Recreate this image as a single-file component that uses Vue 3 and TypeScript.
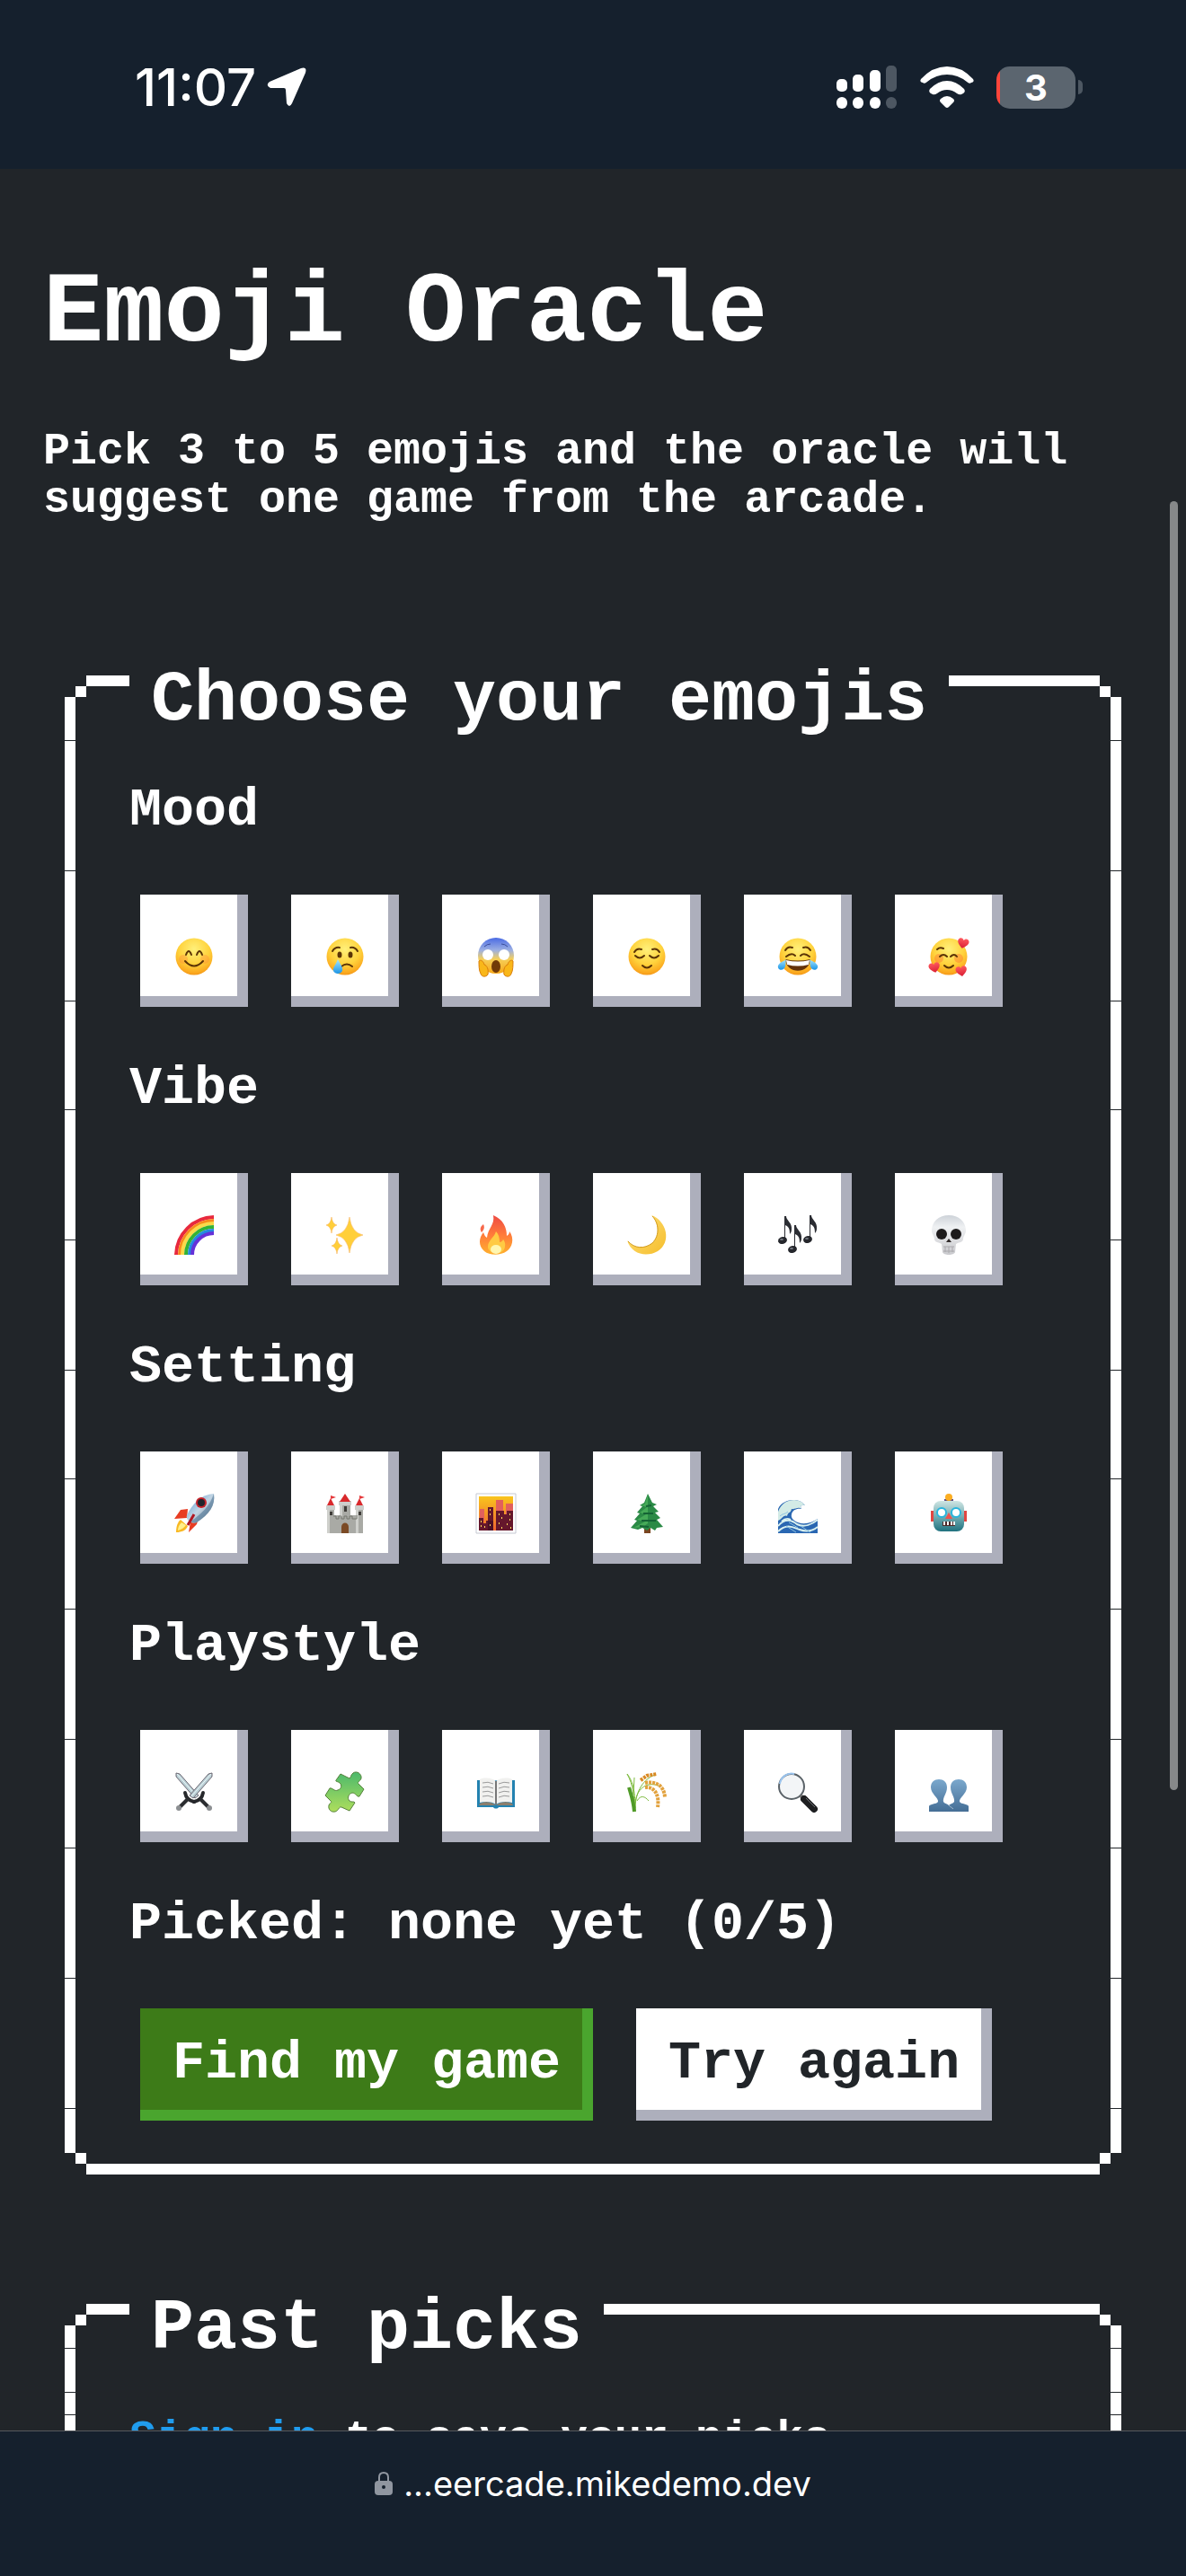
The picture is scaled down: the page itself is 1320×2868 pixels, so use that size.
<script setup lang="ts">
import { computed, ref } from 'vue'

interface Emoji {
  name: string
  art: string
}

interface Group {
  title: string
  emojis: Emoji[]
}

const MAX_PICKS = 5

const face = '<circle cx="22" cy="22" r="20.5" fill="url(#face)"/>'
const ink = 'fill="none" stroke="#5b3406" stroke-linecap="round"'
const heart = (x: number, y: number, turn: number): string =>
  `<path transform="translate(${x} ${y}) rotate(${turn})" d="M0 6C-4 3-7 0-6-3C-5-6-1-6 0-3C1-6 5-6 6-3C7 0 4 3 0 6Z" fill="url(#heart)"/>`
const note = (x: number, y: number, h: number): string =>
  `<path d="M${x} ${y}h2c0 5 7 7 6 15c0 2-1 4-2 5c0-6-1-8-5-10v${h - 12}h-1z" fill="#2b2d33"/><ellipse cx="${x - 2}" cy="${y + h}" rx="5" ry="4" transform="rotate(-15 ${x - 2} ${y + h})" fill="#25272c"/><ellipse cx="${x - 3}" cy="${y + h - 1}" rx="2" ry="1" fill="#777b84"/>`
const spark = (x: number, y: number, w: number, h: number): string =>
  `<path d="M${x} ${y - h}Q${x + w * 0.14} ${y - h * 0.14} ${x + w} ${y}Q${x + w * 0.14} ${y + h * 0.14} ${x} ${y + h}Q${x - w * 0.14} ${y + h * 0.14} ${x - w} ${y}Q${x - w * 0.14} ${y - h * 0.14} ${x} ${y - h}Z" fill="#ffcf3a" stroke="#f7ad55" stroke-width=".5"/>`
const sword =
  '<path d="M2 1L6 2L27 26L23 29L2 5Z" fill="#b9ced4" stroke="#6d6873" stroke-width="1"/><path d="M3 2L25 27" stroke="#eefafb" stroke-width="1"/><path d="M22 33C27 32 31 29 32 23" fill="none" stroke="#26282b" stroke-width="4" stroke-linecap="round"/><path d="M28 29L38 39" stroke="#2b2d30" stroke-width="4"/><circle cx="39" cy="40" r="3" fill="#8c8f92"/>'

const groups: Group[] = [
  {
    title: 'Mood',
    emojis: [
      {
        name: 'smiling face',
        art: `${face}<circle cx="10" cy="25" r="5" fill="#ff7a3c" opacity=".3"/><circle cx="34" cy="25" r="5" fill="#ff7a3c" opacity=".3"/><path d="M13 20Q16 12 19 20M25 20Q28 12 31 20" ${ink} stroke-width="2"/><path d="M12 27Q22 38 32 27" ${ink} stroke-width="2"/>`,
      },
      {
        name: 'crying face',
        art: `${face}<ellipse cx="16" cy="20" rx="2.5" ry="3.5" fill="#5b3406"/><ellipse cx="28" cy="20" rx="2.5" ry="3.5" fill="#5b3406"/><path d="M8 16Q11 11 16 12M36 16Q33 11 28 12M18 33Q24 28 30 33" ${ink} stroke-width="2"/><path d="M14 25C17 31 20 34 19 38C17 42 11 42 9 38C8 34 12 31 14 25Z" fill="url(#tear)"/>`,
      },
      {
        name: 'screaming face',
        art: '<circle cx="22" cy="21" r="20" fill="url(#scream)"/><circle cx="13" cy="20" r="6" fill="#fff"/><circle cx="31" cy="20" r="6" fill="#fff"/><path d="M9 11Q12 8 16 8M35 11Q32 8 28 8" fill="none" stroke="#3c4f9b" stroke-width="1"/><ellipse cx="22" cy="33" rx="5" ry="7" fill="#713a07"/><path d="M3 27C5 25 8 27 9 31C12 32 14 36 13 42C11 45 6 45 5 41C3 38 3 31 3 27ZM41 27C39 25 36 27 35 31C32 32 30 36 31 42C33 45 38 45 39 41C41 38 41 31 41 27Z" fill="#f9b719" stroke="#d97d0b" stroke-width="1"/>',
      },
      {
        name: 'relieved face',
        art: `${face}<path d="M8 17Q11 12 16 14M36 17Q33 12 28 14M9 21Q14 26 19 21M25 21Q30 26 35 21M17 32Q22 37 27 32" ${ink} stroke-width="2"/>`,
      },
      {
        name: 'tears of joy',
        art: `${face}<path d="M8 15Q11 10 16 12M36 15Q33 10 28 12M9 22Q15 17 19 21M35 22Q29 17 25 21" ${ink} stroke-width="2"/><path d="M8 25Q22 28 36 25C35 42 9 42 8 25Z" fill="#63320a"/><path d="M9 26Q22 29 35 26L34 31Q22 34 10 31Z" fill="#fff"/><path d="M9 25C7 27 2 28 0 32C-1 36 3 38 6 36C9 34 8 29 9 25ZM35 25C37 27 42 28 44 32C45 36 41 38 38 36C35 34 36 29 35 25Z" fill="url(#tear)"/>`,
      },
      {
        name: 'smiling face with hearts',
        art: `${face}<circle cx="11" cy="24" r="5" fill="#ff5b2e" opacity=".35"/><circle cx="33" cy="24" r="5" fill="#ff5b2e" opacity=".35"/><path d="M9 14Q12 11 16 13M12 22Q16 18 20 22M24 22Q28 18 31 22M17 32Q22 37 27 32" ${ink} stroke-width="2"/>${heart(38, 7, 12)}${heart(6, 34, -12)}${heart(36, 38, -10)}`,
      },
    ],
  },
  {
    title: 'Vibe',
    emojis: [
      {
        name: 'rainbow',
        art: '<g fill="none" stroke-width="4"><path d="M2 44A43 43 0 0 1 44 2" stroke="#e8293d"/><path d="M6 44A39 39 0 0 1 44 6" stroke="#f98a1b"/><path d="M9 44A35 35 0 0 1 44 9" stroke="#fbd94a"/><path d="M13 44A31 31 0 0 1 44 13" stroke="#34b334"/><path d="M17 44A27 27 0 0 1 44 17" stroke="#2389e0"/><path d="M20 44A24 24 0 0 1 44 20" stroke="#6531d8"/></g>',
      },
      { name: 'sparkles', art: spark(27, 22, 15, 20) + spark(7, 11, 6, 9) + spark(13, 34, 6, 9) },
      {
        name: 'fire',
        art: '<path d="M19 0C30 5 34 13 34 23C36 22 37 20 37 18C43 26 40 36 34 40C27 45 15 45 9 40C2 34 3 25 8 19C9 22 10 24 12 25C13 14 21 11 19 0Z" fill="url(#fire)"/><path d="M8 10C4 13 4 16 6 19C8 17 10 14 8 10Z" fill="#f7684a"/><path d="M22 18C20 25 13 28 13 35C13 44 31 45 32 35C33 31 31 28 30 27C29 29 28 30 26 30C26 25 25 21 22 18Z" fill="#ffca43"/><ellipse cx="22" cy="38" rx="6" ry="5" fill="#fff6b0"/>',
      },
      {
        name: 'crescent moon',
        art: '<path d="M27 0C44 6 50 30 34 40C22 47 5 44 0 28C7 37 19 38 28 31C37 22 35 8 27 0Z" fill="url(#moon)"/><path d="M1 29C8 37 19 38 28 31C37 22 35 8 28 1" fill="none" stroke="#d29a1c" stroke-width="1"/>',
      },
      { name: 'musical notes', art: note(7, 1, 27) + note(18, 11, 27) + note(35, 0, 27) },
      {
        name: 'skull',
        art: '<path d="M22 0C33 0 41 7 41 17C41 21 38 23 38 27C37 31 32 30 30 32L29 41C28 45 16 45 15 41L14 32C12 30 7 31 6 27C6 23 3 21 3 17C3 7 11 0 22 0Z" fill="url(#bone)"/><ellipse cx="14" cy="21" rx="6" ry="6" fill="#1d1b1c"/><ellipse cx="30" cy="21" rx="6" ry="6" fill="#1d1b1c"/><path d="M22 26L19 30H25Z" fill="#302b2b"/><path d="M16 35H28M16 40H28M18 35V41M22 35V42M26 35V41" stroke="#aaa9ad" stroke-width="1"/>',
      },
    ],
  },
  {
    title: 'Setting',
    emojis: [
      {
        name: 'rocket',
        art: '<path d="M15 17L7 18L0 28L14 27ZM27 27L25 34L16 43L18 31Z" fill="#e83c22"/><path d="M7 29C3 32 2 38 2 43C8 43 13 41 15 36Z" fill="#f9b923"/><path d="M8 32C5 35 4 38 4 41C8 40 11 38 13 35Z" fill="#fff08a"/><path d="M44 0C46 13 39 23 25 32C20 35 12 29 14 24C20 11 30 1 44 0Z" fill="url(#steel)"/><path d="M44 0C46 13 39 23 25 32C22 33 20 32 18 31C30 23 40 13 44 0Z" fill="#2f5d86" opacity=".45"/><circle cx="30" cy="10" r="6" fill="#c6222a"/><circle cx="30" cy="10" r="4" fill="#20242c"/><path d="M22 23L15 35" stroke="#b01823" stroke-width="3"/>',
      },
      {
        name: 'castle',
        art: '<path d="M2 16H10V44H2ZM34 16H42V44H34ZM16 10H28V44H16ZM9 24H35V44H9Z" fill="#a9aaa5"/><path d="M2 16H5V44H2ZM16 10H19V26H16ZM34 16H37V44H34Z" fill="#cfd0cc"/><path d="M1 13H11V18H1ZM33 13H43V18H33ZM15 8H29V13H15Z" fill="#cdcecb"/><path d="M6 5L10 13H2ZM38 5L42 13H34ZM22 0L28 9H16Z" fill="#d9292c"/><path d="M6 2L12 4L6 6ZM38 2L44 4L38 6Z" fill="#e5383b"/><path d="M9 25H12V28H15V25H18V28H21V25H24V28H27V25H30V28H35V24" fill="none" stroke="#75776f" stroke-width="1"/><path d="M18 44V37C18 31 26 31 26 37V44Z" fill="#7b4a25"/><path d="M21 14H24V20H21ZM5 20H8V24H5ZM37 20H40V24H37Z" fill="#3e3c38"/>',
      },
      {
        name: 'sunset city',
        art: '<path d="M0 0H44V44H0Z" fill="#fff" stroke="#c5c9d2" stroke-width="1"/><path d="M3 3H41V41H3Z" fill="url(#dusk)"/><path d="M4 17H9V30H4ZM22 7H30V25H22ZM33 11H41V25H33Z" fill="#e2605c"/><path d="M3 27H8V33H11V30H13V15H19V41H3ZM22 19H31V23H34V19H41V41H22ZM11 32H17V41H11Z" fill="#65172c"/><path d="M13 30H19V41H13Z" fill="#4b1026"/><path d="M15 18h1M15 23h1M5 31h1M5 36h1M25 23h1M28 27h1M25 33h1M37 23h1M37 29h1M34 34h1M38 38h1M15 35h1M9 37h1M28 38h1" stroke="#ffd85a" stroke-width="2"/>',
      },
      {
        name: 'evergreen tree',
        art: '<path d="M19 36H26V44H19Z" fill="#7a4520"/><path d="M23 0L28 10L33 12L29 14L35 20L31 21L37 27L33 29L40 37L33 38L31 41L26 38L22 41L17 38L12 40L4 38L11 30L8 29L14 22L11 21L17 14L14 13L19 10Z" fill="#2b8a46"/><path d="M23 1L20 11L16 13L22 15L14 21L21 23L11 29L20 31L7 38L18 37L23 33Z" fill="#46aa58"/><path d="M21 14L27 13M18 22L29 22M16 30L32 30M14 36L24 37" stroke="#156335" stroke-width="2"/>',
      },
      {
        name: 'water wave',
        art: '<path d="M0 44V17C3 10 10 7 18 7C23 7 27 9 30 13C26 12 24 14 26 17C21 16 16 18 15 23C14 27 17 30 22 32C30 35 38 32 44 28V44Z" fill="#2a67b2"/><path d="M0 20C4 10 11 7 18 7C23 7 27 9 30 13C26 12 24 14 26 17C22 14 19 18 15 17C14 22 11 20 10 25C6 23 5 28 0 30Z" fill="#d3ebe6"/><path d="M0 36C8 26 16 30 21 34C29 38 38 34 44 29M0 42C10 32 18 38 24 40C32 43 39 41 44 37M4 31C9 26 12 28 14 29" fill="none" stroke="#d9f1f0" stroke-width="2"/><path d="M2 25C5 22 8 23 11 20M9 36L20 43M25 36L36 43M12 32L22 38" fill="none" stroke="#8cc3e2" stroke-width="1"/>',
      },
      {
        name: 'robot',
        art: '<path d="M2 19H7V31H2ZM37 19H42V31H37Z" fill="#e24642"/><path d="M17 6H27V11H17Z" fill="#5c4b84"/><circle cx="22" cy="4" r="4" fill="#fbae23"/><rect x="5" y="8" width="34" height="34" rx="8" fill="url(#robot)"/><circle cx="14" cy="21" r="5" fill="#fff" stroke="#28b5dd" stroke-width="2"/><circle cx="30" cy="21" r="5" fill="#fff" stroke="#28b5dd" stroke-width="2"/><path d="M22 21L18 28H26Z" fill="#ee5350"/><path d="M15 31H29V36H15Z" fill="#4b2828"/><path d="M16 31H18V35H16ZM20 31H22V35H20ZM24 31H26V35H24ZM27 31H29V35H27Z" fill="#fff"/>',
      },
    ],
  },
  {
    title: 'Playstyle',
    emojis: [
      { name: 'crossed swords', art: `${sword}<g transform="matrix(-1 0 0 1 44 0)">${sword}</g>` },
      {
        name: 'puzzle piece',
        art: '<path d="M17 2L27 7C29 6 28 3 31 1C35-2 41 2 40 7C39 10 35 11 37 13L43 19L38 27C35 28 34 23 30 23C26 24 24 29 27 32C29 34 32 32 33 34L27 43L18 39C15 38 15 43 11 44C6 45 3 41 4 37C5 34 8 34 6 32L0 26L5 18C8 17 10 22 14 20C18 19 19 14 16 12C14 10 11 11 12 9Z" fill="url(#puzzle)" stroke="#55813a" stroke-width="1"/>',
      },
      {
        name: 'open book',
        art: '<path d="M1 9H43V39H25C24 41 20 41 19 39H1Z" fill="#2382b0"/><path d="M4 35C10 32 18 33 22 37C26 33 34 32 40 35L41 37H3Z" fill="#8b7e6d"/><path d="M4 8C11 5 18 7 22 10C26 7 33 5 40 8V34C33 32 26 33 22 36C18 33 11 32 4 34Z" fill="#f1f1ef"/><path d="M22 10V36" stroke="#777" stroke-width="2"/><path d="M7 12Q13 10 19 13M7 17Q13 15 19 18M7 22Q13 20 19 23M7 27Q13 25 19 28M37 12Q31 10 25 13M37 17Q31 15 25 18M37 22Q31 20 25 23M37 27Q31 25 25 28" fill="none" stroke="#9b9b9b" stroke-width="1"/>',
      },
      {
        name: 'sheaf of rice',
        art: '<g fill="none"><path d="M8 44C8 27 7 15 0 2C7 11 9 22 9 44M9 40C9 26 15 9 31 3M9 35C10 20 20 10 35 15M11 32C15 25 20 27 24 32M7 25L8 6" stroke="#7dbb3d" stroke-width="1"/><path d="M8 44C7 32 5 27 2 17" stroke="#4f9a27" stroke-width="4"/><path d="M15 9L22 4L33 2" stroke="#d98a24" stroke-width="4" stroke-dasharray="3 1"/><path d="M20 12C31 10 41 14 42 28M20 17C31 16 36 26 34 39" stroke="#e2a13c" stroke-width="4" stroke-dasharray="3 1"/></g>',
      },
      {
        name: 'magnifying glass',
        art: '<circle cx="15" cy="16" r="14" fill="#f3f5f7" stroke="#5a6268" stroke-width="2"/><path d="M2 13A13 13 0 0 1 18 2" fill="none" stroke="#9cc5ef" stroke-width="2"/><path d="M25 26L29 30" stroke="#777" stroke-width="4"/><path d="M29 30L40 41" stroke="#1e1f21" stroke-width="8" stroke-linecap="round"/><path d="M31 29L41 39" stroke="#6b6e72" stroke-width="1"/>',
      },
      {
        name: 'two people',
        art: '<path d="M0 44V38C1 35 8 36 10 33C11 29 2 24 2 17C2 11 6 8 11 8C16 8 20 11 20 17C20 24 15 28 16 33C17 35 20 35 22 37C24 35 27 35 28 33C29 28 24 24 24 17C24 11 28 8 33 8C38 8 42 11 42 17C42 24 33 29 34 33C36 36 43 35 44 38V44Z" fill="url(#people)"/><path d="M22 37L27 41" stroke="#9fb7ca" stroke-width="1"/>',
      },
    ],
  },
]

const picked = ref<string[]>([])

const summary = computed(() => (picked.value.length ? picked.value.join(', ') : 'none yet'))

function toggle(name: string): void {
  if (picked.value.includes(name)) {
    picked.value = picked.value.filter((item) => item !== name)
  } else if (picked.value.length < MAX_PICKS) {
    picked.value = [...picked.value, name]
  }
}

function reset(): void {
  picked.value = []
}
</script>

<template>
  <div class="phone">
    <svg class="defs" width="0" height="0" aria-hidden="true">
      <defs>
        <radialGradient id="face" cx=".5" cy=".3" r=".75">
          <stop offset="0" stop-color="#fff07a" />
          <stop offset=".55" stop-color="#ffd23c" />
          <stop offset=".85" stop-color="#fba91f" />
          <stop offset="1" stop-color="#ee8a12" />
        </radialGradient>
        <linearGradient id="scream" x2="0" y2="1">
          <stop offset="0" stop-color="#4a6be4" />
          <stop offset=".35" stop-color="#9db0e2" />
          <stop offset=".6" stop-color="#f6cf58" />
          <stop offset="1" stop-color="#f7a716" />
        </linearGradient>
        <linearGradient id="tear" x2="0" y2="1">
          <stop offset="0" stop-color="#a5e6ff" />
          <stop offset="1" stop-color="#1b95e6" />
        </linearGradient>
        <linearGradient id="heart" x2="0" y2="1">
          <stop offset="0" stop-color="#ff5a5f" />
          <stop offset="1" stop-color="#d91e34" />
        </linearGradient>
        <linearGradient id="fire" x2="0" y2="1">
          <stop offset="0" stop-color="#ee4a43" />
          <stop offset=".5" stop-color="#ff7b3a" />
          <stop offset="1" stop-color="#ffb02e" />
        </linearGradient>
        <linearGradient id="moon" x2="1" y2="1">
          <stop offset="0" stop-color="#ffe27c" />
          <stop offset="1" stop-color="#f5bd2b" />
        </linearGradient>
        <linearGradient id="bone" x2="0" y2="1">
          <stop offset="0" stop-color="#cdd2d8" />
          <stop offset=".3" stop-color="#eff1f3" />
          <stop offset="1" stop-color="#c9c9cd" />
        </linearGradient>
        <linearGradient id="steel" x2="1" y2="1">
          <stop offset="0" stop-color="#4f95cf" />
          <stop offset=".5" stop-color="#c2d5e4" />
          <stop offset="1" stop-color="#6c7883" />
        </linearGradient>
        <linearGradient id="dusk" x2="0" y2="1">
          <stop offset="0" stop-color="#f9c51d" />
          <stop offset="1" stop-color="#f0642f" />
        </linearGradient>
        <linearGradient id="robot" x2="0" y2="1">
          <stop offset="0" stop-color="#cfe5e3" />
          <stop offset=".5" stop-color="#76aeb4" />
          <stop offset="1" stop-color="#20727f" />
        </linearGradient>
        <linearGradient id="puzzle" x2="0" y2="1">
          <stop offset="0" stop-color="#4cb96c" />
          <stop offset="1" stop-color="#aede5c" />
        </linearGradient>
        <linearGradient id="people" x2="0" y2="1">
          <stop offset="0" stop-color="#7ba8cd" />
          <stop offset="1" stop-color="#456e95" />
        </linearGradient>
      </defs>
    </svg>

    <header class="status">
      <div class="clock">
        <span>11:07</span>
        <svg width="44" height="44" viewBox="0 0 44 44" aria-hidden="true">
          <path d="M38 1Q45-1 43 6L28 40Q25 46 22 40L21 25Q21 23 19 23L4 23Q-2 20 3 16Z" fill="#fff" />
        </svg>
      </div>
      <div class="indicators">
        <svg width="68" height="50" viewBox="0 0 68 50" aria-hidden="true">
          <g fill="#fff">
            <rect x="0" y="16" width="12" height="14" rx="5" />
            <rect x="18" y="11" width="12" height="19" rx="5" />
            <rect x="37" y="6" width="12" height="24" rx="5" />
            <rect x="0" y="36" width="12" height="13" rx="6" />
            <rect x="18" y="36" width="12" height="13" rx="6" />
            <rect x="37" y="36" width="12" height="13" rx="6" />
          </g>
          <g fill="#4d5762">
            <rect x="55" y="1" width="12" height="29" rx="5" />
            <rect x="55" y="36" width="12" height="13" rx="6" />
          </g>
        </svg>
        <svg width="62" height="48" viewBox="0 0 62 48" aria-hidden="true">
          <path d="M2 15Q15 1 31 1T60 15Q62 18 58 19Q56 21 53 18Q43 10 31 10T9 18Q6 21 4 19Q0 18 2 15Z" fill="#fff" />
          <path d="M12 26Q21 17 31 17T50 26Q52 29 49 31L47 32Q45 33 42 31Q37 27 31 27T20 31Q17 33 15 32L13 31Q10 29 12 26Z" fill="#fff" />
          <path d="M24 37Q31 31 38 37Q40 39 38 41L33 46Q31 48 29 46L24 41Q22 39 24 37Z" fill="#fff" />
        </svg>
        <div class="battery">
          <span class="charge">3</span>
        </div>
      </div>
    </header>

    <main class="page">
      <h1>Emoji Oracle</h1>
      <p class="intro">Pick 3 to 5 emojis and the oracle will suggest one game from the arcade.</p>

      <section class="panel picker">
        <h2>Choose your emojis</h2>
        <div v-for="group in groups" :key="group.title" class="group">
          <h3>{{ group.title }}</h3>
          <div class="row">
            <button
              v-for="emoji in group.emojis"
              :key="emoji.name"
              type="button"
              class="btn tile"
              :aria-label="emoji.name"
              :aria-pressed="picked.includes(emoji.name)"
              @click="toggle(emoji.name)"
            >
              <svg width="44" height="44" viewBox="0 0 44 44" aria-hidden="true" v-html="emoji.art" />
            </button>
          </div>
        </div>
        <p class="summary">Picked: {{ summary }} ({{ picked.length }}/{{ MAX_PICKS }})</p>
        <div class="row">
          <button type="button" class="btn go">Find my game</button>
          <button type="button" class="btn" @click="reset">Try again</button>
        </div>
      </section>

      <section class="panel history">
        <h2>Past picks</h2>
        <p class="signin"><a href="#sign-in">Sign in</a> to save your picks.</p>
      </section>

      <div class="scrollbar" aria-hidden="true"></div>
    </main>

    <footer class="address">
      <svg width="20" height="27" viewBox="0 0 20 27" aria-hidden="true">
        <path d="M5 12V7Q5 2 10 2T15 7V12" fill="none" stroke="#9096a0" stroke-width="2" />
        <rect x="0" y="11" width="20" height="16" rx="4" fill="#9096a0" />
        <circle cx="10" cy="18" r="2" fill="#15202d" />
      </svg>
      <span>...eercade.mikedemo.dev</span>
    </footer>
  </div>
</template>

<style>
body {
  margin: 0;
  background: #212529;
}
</style>

<style scoped>
.phone {
  display: flex;
  flex-direction: column;
  height: 100vh;
  overflow: hidden;
  background: #212529;
  color: #fff;
  font-family: 'Liberation Mono', monospace;
  font-weight: 700;
}

.defs {
  position: absolute;
}

.status {
  display: flex;
  flex: none;
  align-items: center;
  justify-content: space-between;
  box-sizing: border-box;
  height: 188px;
  padding: 6px 115px 0 150px;
  background: #15202d;
  font-family: Inter, sans-serif;
}

.clock {
  display: flex;
  align-items: center;
  gap: 12px;
  font-size: 58px;
  font-weight: 500;
  line-height: 60px;
}

.indicators {
  display: flex;
  align-items: center;
  gap: 24px;
}

.battery {
  display: flex;
  align-items: center;
  gap: 3px;
}

.battery::after {
  width: 5px;
  height: 16px;
  border-radius: 0 5px 5px 0;
  background: #4d5762;
  content: '';
}

.charge {
  width: 88px;
  border-radius: 15px;
  background: linear-gradient(90deg, #ff453a 4px, #5b656f 4px);
  font-size: 40px;
  line-height: 47px;
  text-align: center;
}

.page {
  position: relative;
  flex: 1 1 0;
  min-height: 0;
  box-sizing: border-box;
  overflow: hidden;
  padding: 106px 48px 0;
}

h1,
h2,
h3,
p {
  margin: 0;
}

h1 {
  font-size: 112px;
  line-height: 112px;
}

.intro {
  margin-top: 70px;
  font-size: 50px;
  line-height: 54px;
}

.panel {
  --bar: linear-gradient(#fff, #fff);
  display: flow-root;
  margin: 0 24px;
  padding: 0 72px 60px;
  background:
    var(--seams) left var(--seam-start) / 12px var(--seam-tile) repeat-y,
    var(--seams) right var(--seam-start) / 12px var(--seam-tile) repeat-y,
    var(--bar) center top / calc(100% - 48px) 12px no-repeat,
    var(--bar) center bottom / calc(100% - 48px) 12px no-repeat,
    var(--bar) left center / 12px calc(100% - 48px) no-repeat,
    var(--bar) right center / 12px calc(100% - 48px) no-repeat,
    var(--bar) left 12px top 12px / 12px 12px no-repeat,
    var(--bar) right 12px top 12px / 12px 12px no-repeat,
    var(--bar) left 12px bottom 12px / 12px 12px no-repeat,
    var(--bar) right 12px bottom 12px / 12px 12px no-repeat;
}

.picker {
  --seam-start: 72px;
  --seam-tile: 411px;
  --seams: linear-gradient(#212529 1px, transparent 1px 145px, #212529 145px 146px, transparent 146px 290px, #212529 290px 291px, transparent 291px);
  margin-top: 168px;
}

.history {
  --seam-start: 49px;
  --seam-tile: 123px;
  --seams: linear-gradient(#212529 1px, transparent 1px 49px, #212529 49px 50px, transparent 50px 74px, #212529 74px 75px, transparent 75px);
  margin-top: 144px;
}

h2 {
  width: fit-content;
  padding: 0 24px;
  background: #212529;
  font-size: 80px;
  line-height: 56px;
}

h3,
.summary {
  font-size: 60px;
  line-height: 60px;
}

.group {
  padding-bottom: 61px;
}

h2 + .group {
  padding-top: 64px;
}

.row {
  display: flex;
  flex-wrap: wrap;
  gap: 24px 48px;
  margin: 64px 12px 0;
}

.btn {
  height: 125px;
  padding: 0 36px 4px;
  border: 0;
  border-radius: 0;
  background: #fff;
  box-shadow: inset -12px -12px #adafbc;
  color: #212529;
  font: inherit;
  font-size: 60px;
  line-height: 60px;
  cursor: pointer;
}

.tile {
  display: flex;
  align-items: center;
  justify-content: center;
  width: 120px;
  padding: 12px 0 0;
}

.tile svg {
  overflow: visible;
}

.go {
  background: #3d7b18;
  box-shadow: inset -12px -12px #4aa52e;
  color: #fff;
}

.signin {
  margin-top: 68px;
  font-size: 50px;
  line-height: 54px;
}

.signin a {
  color: #209cee;
  text-decoration: none;
}

.scrollbar {
  position: absolute;
  top: 370px;
  right: 9px;
  width: 9px;
  height: 57%;
  border-radius: 5px;
  background: #868889;
}

.address {
  display: flex;
  flex: none;
  align-items: center;
  justify-content: center;
  gap: 12px;
  box-sizing: border-box;
  height: 162px;
  padding-bottom: 46px;
  border-top: 1px solid #56595d;
  background: #15202d;
  font-family: Inter, sans-serif;
  font-size: 38px;
  font-weight: 400;
  line-height: 48px;
}
</style>
